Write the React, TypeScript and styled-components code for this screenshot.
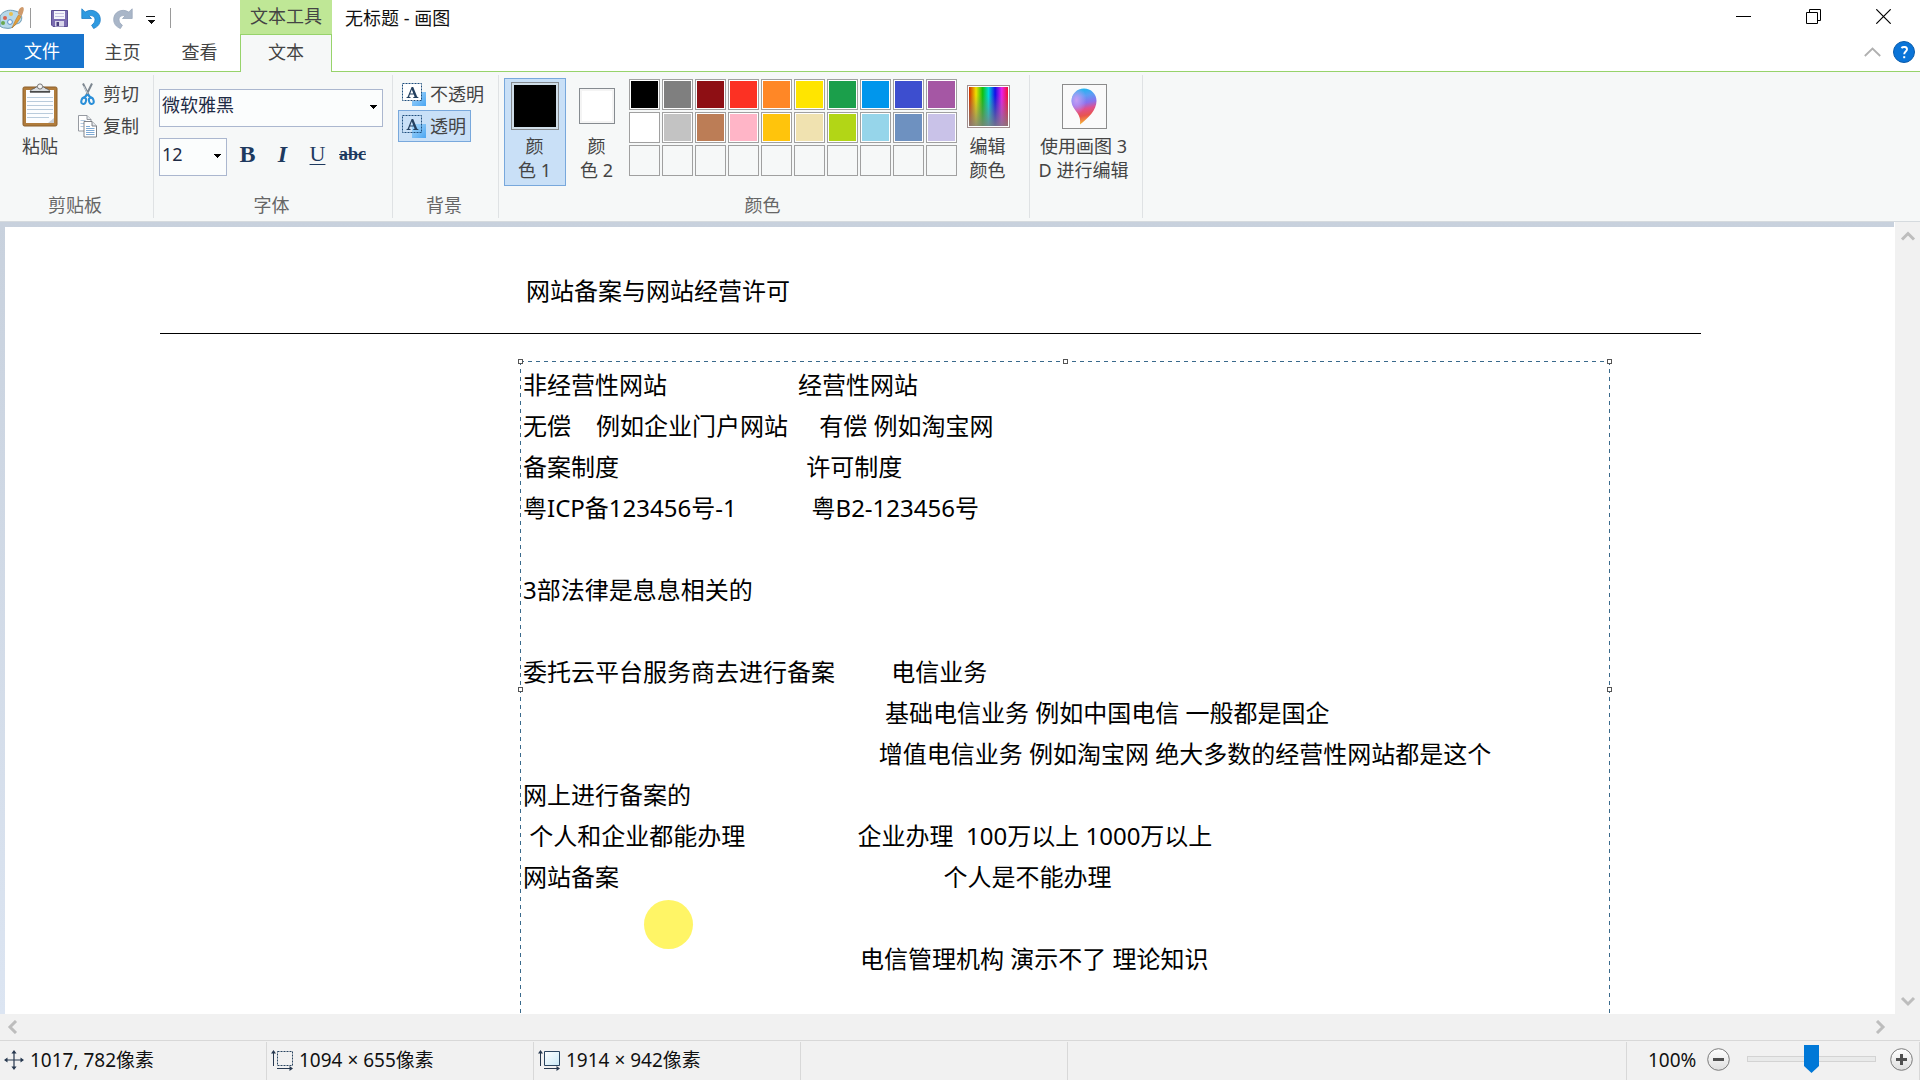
import React from "react";
import styled, { createGlobalStyle } from "styled-components";

const Global = createGlobalStyle`
  * { box-sizing: border-box; }
  body {
    margin: 0;
    background: #fff;
    overflow: hidden;
  }
  body, button, select, textarea, input {
    font-family: "Noto Sans", "Noto Sans CJK SC", sans-serif;
    font-size: 18px;
    font-weight: 400;
    line-height: 24px;
  }
  button, select, textarea { color: inherit; }
`;

const Window = styled.div`
  display: flex;
  flex-direction: column;
  height: 100vh;
  color: #444;
`;

const PlainButton = styled.button`
  display: flex;
  align-items: center;
  justify-content: center;
  padding: 0;
  border: 0;
  background: none;
`;

/* ---------- title bar ---------- */

const TitleBar = styled.header`
  display: flex;
  height: 34px;
  flex: none;
`;

const QuickAccess = styled.div`
  display: flex;
  align-items: center;
  width: 240px;
  padding-top: 2px;
`;

const QuickButtons = styled.div`
  display: flex;
  padding: 0 8px 0 13px;
`;

const QuickButton = styled(PlainButton)<{ $width: number }>`
  width: ${(p) => p.$width}px;
  height: 30px;
`;

const QuickDivider = styled.span`
  width: 1px;
  height: 20px;
  background: #9a9a9a;
`;

const ContextTitle = styled.div`
  width: 92px;
  padding-top: 4px;
  background: #bfe796;
  text-align: center;
`;

const Title = styled.h1`
  flex: 1;
  margin: 0;
  padding: 6px 0 0 13px;
  color: #111;
  font-size: 18px;
  font-weight: 400;
  line-height: 24px;
`;

const WindowButtons = styled.div`
  display: flex;
  align-items: flex-start;
  padding-right: 2px;
`;

const WindowButton = styled(PlainButton)`
  width: 70px;
  height: 33px;
`;

/* ---------- tabs ---------- */

const TabRow = styled.nav`
  display: flex;
  flex: none;
  height: 38px;
  background: linear-gradient(#97d36b, #97d36b) bottom / 100% 1px no-repeat;
`;

const FileTab = styled(PlainButton)`
  width: 84px;
  height: 34px;
  background: #1874cd;
  color: #fff;
`;

const Tab = styled(PlainButton)`
  width: 77px;
  height: 36px;
`;

const ActiveTab = styled(PlainButton)`
  width: 92px;
  height: 38px;
  margin-left: 2px;
  padding-bottom: 3px;
  border: solid #97d36b;
  border-width: 1px 1px 0;
  background: #f6f8f8;
`;

const TabTools = styled.div`
  display: flex;
  align-items: center;
  gap: 12px;
  height: 36px;
  margin-left: auto;
  padding-right: 5px;
`;

/* ---------- ribbon ---------- */

const Ribbon = styled.section`
  display: flex;
  flex: none;
  height: 150px;
  padding: 3px 0;
  border-bottom: 1px solid #d5dade;
  background: #f6f8f8;
`;

const Group = styled.div<{ $width: number }>`
  display: flex;
  flex-direction: column;
  width: ${(p) => p.$width}px;
  border-right: 1px solid #dfe2e4;
`;

const GroupBody = styled.div`
  display: flex;
  flex: 1;
`;

const GroupLabel = styled.div`
  height: 25px;
  padding-right: 3px;
  color: #666;
  text-align: center;
`;

const PasteButton = styled(PlainButton)`
  flex-direction: column;
  justify-content: flex-start;
  gap: 6px;
  width: 40px;
  height: 84px;
  margin: 8px 18px 0 20px;
`;

const SmallStack = styled.div`
  display: flex;
  flex-direction: column;
  padding-top: 3px;
`;

const SmallButton = styled(PlainButton)<{ $active?: boolean }>`
  align-self: flex-start;
  gap: 4px;
  height: 32px;
  padding: 0 4px 0 3px;
  border: 1px solid ${(p) => (p.$active ? "#78a8dc" : "transparent")};
  background: ${(p) => (p.$active ? "#c9e0f7" : "none")};
`;

const ClipButton = styled(PlainButton)`
  gap: 6px;
  height: 32px;
`;

const FontColumn = styled.div`
  display: flex;
  flex-direction: column;
  gap: 11px;
  padding: 14px 0 0 5px;
`;

const FontRow = styled.div`
  display: flex;
  align-items: flex-start;
`;

const SelectBox = styled.label<{ $width: number }>`
  display: block;
  position: relative;
  width: ${(p) => p.$width}px;
  height: 38px;
`;

const Select = styled.select`
  width: 100%;
  height: 100%;
  padding: 0 0 7px 2px;
  appearance: none;
  border: 1px solid #abb7cf;
  border-radius: 0;
  background: #fbfdfd;
  color: #1e2b45;
  outline: none;
`;

const SelectArrow = styled.svg`
  position: absolute;
  top: 16px;
  right: 6px;
  pointer-events: none;
`;

const StyleButton = styled(PlainButton)`
  width: 35px;
  height: 32px;
  color: #1e3a5f;
  font-family: "Liberation Serif", serif;
  font-size: 24px;
`;

const StyleButtons = styled.div`
  display: flex;
  padding-left: 3px;
`;

const Bold = styled.b``;
const Italic = styled.i`
  font-weight: 700;
`;
const Underline = styled.u`
  font-size: 22px;
  text-decoration-thickness: 1px;
  text-underline-offset: 3px;
`;
const Strike = styled.s`
  font-size: 18px;
  font-weight: 700;
`;

const BackgroundStack = styled(SmallStack)`
  padding-left: 5px;
`;

const ColorBody = styled(GroupBody)`
  padding: 3px 0 0 5px;
`;

const BigButton = styled(PlainButton)<{ $width: number; $active?: boolean }>`
  flex-direction: column;
  justify-content: space-between;
  width: ${(p) => p.$width}px;
  height: 108px;
  padding: 3px 0;
  border: 1px solid ${(p) => (p.$active ? "#78a8dc" : "transparent")};
  background: ${(p) => (p.$active ? "#c9e0f7" : "none")};
`;

const IconSlot = styled.span`
  display: flex;
  align-items: center;
  justify-content: center;
  height: 48px;
`;

const Caption = styled.span`
  display: block;
  padding-right: 1px;
  text-align: center;
  white-space: pre-line;
`;

const CurrentColor = styled.span<{ $size: number; $color: string }>`
  width: ${(p) => p.$size}px;
  height: ${(p) => p.$size}px;
  padding: 2px;
  border: 1px solid #868b90;
  background-color: ${(p) => p.$color};
  background-clip: content-box;
  box-shadow: inset 0 0 0 2px ${(p) => (p.$color === "#ffffff" ? "#f4f4f4" : "#cfdde8")};
`;

const Palette = styled.div`
  display: grid;
  grid-template-columns: repeat(10, 31px);
  grid-auto-rows: 31px;
  gap: 2px;
  padding: 1px 6px 0 1px;
`;

const Swatch = styled.button<{ $color?: string }>`
  padding: 1px;
  border: 1px solid #a0a0a0;
  background-color: ${(p) => p.$color ?? "#f6f8f8"};
  background-clip: content-box;
  box-shadow: inset 0 0 0 1px ${(p) => (p.$color ? "#ffffff" : "#f6f8f8")};
`;

const Spectrum = styled.span`
  width: 43px;
  height: 43px;
  padding: 1px;
  border: 1px solid #a08f8f;
  background:
    linear-gradient(transparent 20%, #808080 115%) content-box,
    linear-gradient(90deg, #d02a00, #f0e000 18%, #10c010 35%, #00d8d8 50%, #1010e8 67%, #e820e8 84%, #f01030) content-box,
    #fff;
`;

const Paint3D = styled.span`
  display: flex;
  align-items: center;
  justify-content: center;
  width: 45px;
  height: 45px;
  border: 1px solid #8c8c8c;
  background: #fafafa;
`;

/* ---------- work area ---------- */

const WorkArea = styled.main`
  display: grid;
  grid-template: minmax(0, 1fr) 26px / minmax(0, 1fr) 25px;
  flex: 1;
  min-height: 0;
`;

const Desk = styled.div`
  display: flex;
  min-height: 0;
  padding: 5px 1px 0 5px;
  background:
    linear-gradient(#fff, #fff) right / 1px 100% no-repeat,
    linear-gradient(#c8d1dd, #dce5f2);
`;

const Canvas = styled.div`
  position: relative;
  flex: 1;
  overflow: hidden;
  background: #fff;
  color: #000;
`;

const CanvasHeading = styled.p`
  position: absolute;
  left: 521px;
  top: 43px;
  margin: 0;
  font-size: 24px;
  line-height: 41px;
  white-space: nowrap;
`;

const CanvasRule = styled.div`
  position: absolute;
  left: 155px;
  top: 106px;
  width: 1541px;
  height: 1px;
  background: #000;
`;

const TextFrame = styled.div`
  position: absolute;
  left: 515px;
  top: 134px;
  width: 1090px;
  height: 656px;
  padding: 3px 2px 2px 3px;
  background:
    repeating-linear-gradient(90deg, #3a6a8c 0 4px, transparent 4px 8px) top / 100% 1px no-repeat,
    repeating-linear-gradient(90deg, #3a6a8c 0 4px, transparent 4px 8px) bottom / 100% 1px no-repeat,
    repeating-linear-gradient(#3a6a8c 0 4px, transparent 4px 8px) left / 1px 100% no-repeat,
    repeating-linear-gradient(#3a6a8c 0 4px, transparent 4px 8px) right / 1px 100% no-repeat;
`;

const TextEditor = styled.textarea`
  display: block;
  width: 100%;
  height: 100%;
  padding: 0;
  border: 0;
  background: none;
  outline: none;
  overflow: hidden;
  resize: none;
  font-size: 24px;
  line-height: 41px;
  white-space: pre;
`;

const Handle = styled.span<{ $x: string; $y: string }>`
  position: absolute;
  left: ${(p) => p.$x};
  top: ${(p) => p.$y};
  width: 5px;
  height: 5px;
  margin: -2px;
  border: 1px solid #555;
  background: #fff;
`;

const PointerSpot = styled.div`
  position: absolute;
  left: 639px;
  top: 673px;
  width: 49px;
  height: 49px;
  border-radius: 50%;
  background: #fff566;
`;

const VerticalScroll = styled.div`
  display: flex;
  flex-direction: column;
  align-items: center;
  justify-content: space-between;
  padding: 8px 0 6px;
  background: #f1f1f1;
`;

const HorizontalScroll = styled.div`
  display: flex;
  align-items: center;
  justify-content: space-between;
  grid-column: 1 / -1;
  padding: 0 32px 0 5px;
  background: #f1f1f1;
`;

const ScrollButton = styled(PlainButton)`
  width: 16px;
  height: 14px;
`;

/* ---------- status bar ---------- */

const StatusBar = styled.footer`
  display: flex;
  flex: none;
  height: 40px;
  padding-top: 1px;
  border-top: 1px solid #d8d8d8;
  background: #f1f1f1;
  color: #111;
  font-size: 19px;
`;

const StatusCell = styled.div`
  display: flex;
  align-items: center;
  gap: 6px;
  width: 267px;
  padding: 0 0 2px 4px;
  border-right: 1px solid #d8d8d8;
`;

const StatusFill = styled.div`
  flex: 1;
  border-right: 1px solid #d8d8d8;
`;

const ZoomCell = styled.div`
  display: flex;
  align-items: center;
  width: 293px;
  padding: 0 6px 4px 21px;
  border-right: 1px solid #d8d8d8;
`;

const ZoomValue = styled.span`
  width: 59px;
  padding-top: 2px;
`;

const ZoomSlider = styled.input`
  height: 28px;
  margin: 0 14px 0 17px;
  flex: 1;
  min-width: 0;
  appearance: none;
  background: none;
  &::-webkit-slider-runnable-track {
    height: 6px;
    border: 1px solid #d3d3d3;
    background: #e9eaea;
  }
  &::-webkit-slider-thumb {
    appearance: none;
    width: 15px;
    height: 28px;
    margin-top: -12px;
    border: 0;
    border-radius: 0;
    background: #0078d7;
    clip-path: polygon(0 0, 100% 0, 100% 75%, 50% 100%, 0 75%);
  }
`;

/* ---------- drawings ---------- */

const AppIcon = () => (
  <svg width="25" height="24" viewBox="0 0 25 24">
    <path d="M0 10C3 5 9 3 15 5c6 1 8 6 6 10-1 3-4 2-6 4-2 3-6 4-10 3-2 0-4-1-5-2z" fill="#b7d9ea" stroke="#6f9cb5" />
    <circle cx="11" cy="8" r="2" fill="#e9c04e" />
    <circle cx="5" cy="12" r="2" fill="#d8644f" />
    <circle cx="3" cy="17" r="2" fill="#6aa84f" />
    <circle cx="10" cy="16" r="2.4" fill="#f4fbff" stroke="#5b8fc9" />
    <path d="M12 22c2-5 4-9 6.500-13l2.500 1.500c-2 4-5 8-9 11.500z" fill="#e3a03c" stroke="#b9772a" strokeWidth=".6" />
    <path d="M18 8c0-3 1-6 4-7 2 0 2 2 1.500 4s-1 3-2 5z" fill="#cf9a6b" />
  </svg>
);

const SaveIcon = () => (
  <svg width="17" height="17" viewBox="0 0 17 17">
    <path d="M.5.5h16v16H2l-1.500-1.500z" fill="#7a6bb0" stroke="#5d4f94" />
    <path d="M3 1h11v8H3z" fill="#f5f4fb" />
    <path d="M4 3.500h9M4 6.500h9" stroke="#c5bfe0" />
    <path d="M4 11h9v5.500H4z" fill="#d9d6ea" />
    <path d="M5.500 12H8v4H5.500z" fill="#4c4180" />
  </svg>
);

const TurnArrow = ({ color, edge, flip }: { color: string; edge: string; flip?: boolean }) => (
  <svg width="20" height="21" viewBox="0 0 20 21">
    <g transform={flip ? "translate(20 0) scale(-1 1)" : undefined}>
      <path
        d="M.8 .8V10.500H10.500L7.800 7.800c3.500-.8 6 .8 6.200 3.700.1 2.300-1.200 4.200-3.400 5.700l2 3.300c4.500-1.800 6.800-5 6.700-9.200C19.200 4.200 11.500-.2 4.200 4z"
        fill={color}
        stroke={edge}
        strokeWidth=".8"
      />
    </g>
  </svg>
);

const CustomizeIcon = () => (
  <svg width="9" height="12" viewBox="0 0 9 12" shapeRendering="crispEdges">
    <path d="M0 4h9v1H0zM1 8h8L5 12z" fill="#111" />
  </svg>
);

const MinimizeIcon = () => (
  <svg width="15" height="15" viewBox="0 0 15 15" shapeRendering="crispEdges">
    <path d="M0 7h15v1H0z" fill="#000" />
  </svg>
);

const RestoreIcon = () => (
  <svg width="15" height="15" viewBox="0 0 15 15" fill="none" stroke="#000">
    <path d="M.5 3.500h11v11H.5zM3.500 3.500v-3h11v11h-3" />
  </svg>
);

const CloseIcon = () => (
  <svg width="15" height="15" viewBox="0 0 15 15" stroke="#000" strokeWidth="1.200">
    <path d="M.3.3l14.400 14.400M14.700.3L.3 14.700" />
  </svg>
);

const CollapseIcon = () => (
  <svg width="17" height="10" viewBox="0 0 17 10" fill="none" stroke="#b0b0b0" strokeWidth="1.800">
    <path d="M.8 9l7.700-7.500L16.200 9" />
  </svg>
);

const HelpIcon = () => (
  <svg width="22" height="22" viewBox="0 0 22 22">
    <circle cx="11" cy="11" r="10.500" fill="#0a74d8" stroke="#0b5cab" />
    <path d="M8.400 7c1.500-1.500 5.600-1.500 5.600 1.200 0 2.300-2.800 2.400-2.800 5" fill="none" stroke="#fff" strokeWidth="1.900" />
    <path d="M10.200 15.200h2v2h-2z" fill="#fff" />
  </svg>
);

const PasteIcon = () => (
  <svg width="36" height="45" viewBox="0 0 36 45">
    <rect x="1" y="4" width="34" height="39" rx="1.500" fill="#b07c3c" stroke="#8b5f2b" />
    <path d="M4 7h28v33H4z" fill="#fcfdff" />
    <path d="M26 40l6-5v5z" fill="#c9ced6" />
    <path d="M5 14.500h26M5 18.500h26M5 22.500h26M5 26.500h26M5 30.500h26M5 34.500h22" stroke="#b9cbdc" />
    <path d="M8 8.500c1-3 5-2.500 6-4.500h8c1 2 5 1.500 6 4.500z" fill="#d9dcdf" stroke="#555" strokeWidth=".8" />
    <path d="M8 9h20" stroke="#333" strokeWidth="1.300" />
    <circle cx="18" cy="3.500" r="2.600" fill="#f4f4f4" stroke="#777" />
  </svg>
);

const CutIcon = () => (
  <svg width="19" height="24" viewBox="0 0 19 24" fill="none">
    <path d="M5 1.500l6.200 12.800M14 1.500L7.800 14.300" stroke="#7d8790" strokeWidth="2" />
    <path d="M5.600 4l3.900 7.500" stroke="#c9d0d6" />
    <path d="M9.500 12.500L5.500 16M9.500 12.500l4 3.500" stroke="#2b8fd8" strokeWidth="2.200" />
    <ellipse cx="5.700" cy="18.800" rx="2.300" ry="3.200" stroke="#2b8fd8" strokeWidth="2" transform="rotate(18 5.700 18.800)" />
    <ellipse cx="13.300" cy="18.800" rx="2.300" ry="3.200" stroke="#2b8fd8" strokeWidth="2" transform="rotate(-18 13.300 18.800)" />
  </svg>
);

const CopyIcon = () => (
  <svg width="19" height="23" viewBox="0 0 19 23" strokeWidth=".9">
    <path d="M.5.5H9l4 4v11.500H.5z" fill="#fff" stroke="#8b9097" />
    <path d="M9 .5v4h4" fill="#e4e8ec" stroke="#8b9097" />
    <path d="M2.500 5.500h5M2.500 8.500h4M2.500 11.500h3" stroke="#a9c3dd" />
    <path d="M6 6.500h8l4.500 4.500v11H6z" fill="#fff" stroke="#6f747b" />
    <path d="M14 6.500V11h4.500" fill="#e4e8ec" stroke="#6f747b" />
    <path d="M8 11.500h4M8 13.500h8.500M8 15.500h8.500M8 17.500h8.500M8 19.500h8.500" stroke="#6fa0cf" />
  </svg>
);

const ArrowDown = () => (
  <SelectArrow width="7" height="4" viewBox="0 0 7 4" shapeRendering="crispEdges">
    <path d="M0 0h7L3.500 4z" fill="#000" />
  </SelectArrow>
);

const BackdropIcon = ({ opaque }: { opaque?: boolean }) => (
  <svg width="24" height="23" viewBox="0 0 24 23">
    <defs>
      <linearGradient id="backdropBlue" x1="0" y1="0" x2="1" y2="1">
        <stop offset="0" stopColor="#a8d8fb" />
        <stop offset="1" stopColor="#4ba6f2" />
      </linearGradient>
    </defs>
    <path d="M10 9h14v14H10z" fill="url(#backdropBlue)" />
    {opaque && <path d="M1 1h18v17H1z" fill="#fff" />}
    <path d="M.5.500h19v17H.5z" fill="none" stroke="#1f4e7d" strokeDasharray="2 1" />
    <path
      d="M4.500 15v-.8l1.200-.4L9.600 4h1.600l4 9.800 1.200.4v.8h-5.200v-.8l1.400-.4-.8-2.200H7.900l-.8 2.200 1.500.4v.8zM8.300 10.400h3L9.800 6.400z"
      fill="#24405f"
    />
  </svg>
);

const Paint3DIcon = () => (
  <svg width="26" height="37" viewBox="0 0 26 37">
    <defs>
      <linearGradient id="dropBody" x1=".35" y1="0" x2=".5" y2="1">
        <stop offset="0" stopColor="#18b8ee" />
        <stop offset=".22" stopColor="#5c9df5" />
        <stop offset=".42" stopColor="#8a70ec" />
        <stop offset=".58" stopColor="#e0508e" />
        <stop offset=".76" stopColor="#e8554e" />
        <stop offset="1" stopColor="#f8c030" />
      </linearGradient>
      <radialGradient id="dropShine" cx=".2" cy=".32" r=".4">
        <stop offset="0" stopColor="#c79cf4" />
        <stop offset="1" stopColor="#c79cf4" stopOpacity="0" />
      </radialGradient>
    </defs>
    <path d="M13 .5c7 0 12.500 5.500 12.500 12.500 0 9-8 17-16.500 23.500.5-5 0-7.500-3-12C3 20.500.5 17 .5 13 .5 6 6 .5 13 .5z" fill="url(#dropBody)" />
    <path d="M13 .5c7 0 12.500 5.500 12.500 12.500 0 9-8 17-16.500 23.500.5-5 0-7.500-3-12C3 20.500.5 17 .5 13 .5 6 6 .5 13 .5z" fill="url(#dropShine)" />
  </svg>
);

const chevrons = {
  up: "M2 9.500L8 3.500l6 6",
  down: "M2 4l6 6 6-6",
  left: "M11 1L5 7l6 6",
  right: "M5 1l6 6-6 6",
};

const Chevron = ({ dir }: { dir: keyof typeof chevrons }) => (
  <svg width="16" height="14" viewBox="0 0 16 14" fill="none" stroke="#bdbdbd" strokeWidth="3">
    <path d={chevrons[dir]} />
  </svg>
);

const PositionIcon = () => (
  <svg width="20" height="20" viewBox="0 0 20 20">
    <path d="M10 2v16M2 10h16" stroke="#27384f" strokeWidth="1.200" />
    <path d="M10 0l2.600 3.500H7.400zM10 20l2.600-3.500H7.400zM0 10l3.500-2.600v5.200zM20 10l-3.500-2.600v5.200z" fill="#27384f" />
  </svg>
);

const SizeIcon = ({ dashed }: { dashed?: boolean }) => (
  <svg width="22" height="21" viewBox="0 0 22 21">
    <defs>
      <linearGradient id="sheetFill" x1="0" y1="0" x2="1" y2="1">
        <stop offset="0" stopColor="#fff" />
        <stop offset="1" stopColor="#c9e9f7" />
      </linearGradient>
    </defs>
    <path
      d="M6.500 1.500h15v14h-15z"
      fill={dashed ? "none" : "url(#sheetFill)"}
      stroke="#2b4560"
      strokeDasharray={dashed ? "2 1" : undefined}
    />
    <path d="M2.500 2v14M6 18.500h13" stroke="#27384f" />
    <path d="M2.500 0L5 3.500H0zM22 18.500L18.500 21v-5z" fill="#27384f" />
  </svg>
);

const ZoomIcon = ({ plus }: { plus?: boolean }) => (
  <svg width="23" height="23" viewBox="0 0 23 23">
    <defs>
      <linearGradient id="zoomFace" x1="0" y1="0" x2="0" y2="1">
        <stop offset="0" stopColor="#fff" />
        <stop offset="1" stopColor="#dedede" />
      </linearGradient>
    </defs>
    <circle cx="11.500" cy="11.500" r="10.800" fill="url(#zoomFace)" stroke="#7b7b7b" />
    <path d="M6 11.500h11" stroke="#4f4f4f" strokeWidth="3" />
    {plus && <path d="M11.500 6v11" stroke="#4f4f4f" strokeWidth="3" />}
  </svg>
);

/* ---------- content ---------- */

const paletteColors: (string | undefined)[] = [
  "#000000", "#7f7f7f", "#8e0f14", "#fc3123", "#ff8726", "#ffe500", "#1b9f4b", "#0096ec", "#3d4ecf", "#a557a4",
  "#ffffff", "#c3c3c3", "#bc7d56", "#ffb5c7", "#ffc40c", "#f0e2b0", "#b2d616", "#96d5ea", "#6e91c0", "#c9c2e8",
  ...Array(10).fill(undefined),
];

const gap = (n: number) => " ".repeat(n);

const noteLines = [
  `非经营性网站${gap(21)}经营性网站`,
  `无偿${gap(4)}例如企业门户网站${gap(5)}有偿 例如淘宝网`,
  `备案制度${gap(30)}许可制度`,
  `粤ICP备123456号-1${gap(12)}粤B2-123456号`,
  "",
  "3部法律是息息相关的",
  "",
  `委托云平台服务商去进行备案${gap(9)}电信业务`,
  `${gap(58)}基础电信业务 例如中国电信 一般都是国企`,
  `${gap(57)}增值电信业务 例如淘宝网 绝大多数的经营性网站都是这个`,
  "网上进行备案的",
  ` 个人和企业都能办理${gap(18)}企业办理  100万以上 1000万以上`,
  `网站备案${gap(52)}个人是不能办理`,
  "",
  `${gap(54)}电信管理机构 演示不了 理论知识`,
];

const handles = [
  ["0px", "0px"],
  ["50%", "0px"],
  ["calc(100% - 1px)", "0px"],
  ["0px", "50%"],
  ["calc(100% - 1px)", "50%"],
];

export default function App() {
  return (
    <Window>
      <Global />
      <TitleBar>
        <QuickAccess>
          <AppMark><AppIcon /></AppMark>
          <QuickDivider />
          <QuickButtons>
            <QuickButton $width={30} aria-label="保存"><SaveIcon /></QuickButton>
            <QuickButton $width={34} aria-label="撤消"><TurnArrow color="#2f9ae0" edge="#1f7fc6" /></QuickButton>
            <QuickButton $width={30} aria-label="重做"><TurnArrow color="#a9b6c8" edge="#9aa8bc" flip /></QuickButton>
            <QuickButton $width={24} aria-label="自定义快速访问工具栏"><CustomizeIcon /></QuickButton>
          </QuickButtons>
          <QuickDivider />
        </QuickAccess>
        <ContextTitle>文本工具</ContextTitle>
        <Title>无标题 - 画图</Title>
        <WindowButtons>
          <WindowButton aria-label="最小化"><MinimizeIcon /></WindowButton>
          <WindowButton aria-label="还原"><RestoreIcon /></WindowButton>
          <WindowButton aria-label="关闭"><CloseIcon /></WindowButton>
        </WindowButtons>
      </TitleBar>
      <TabRow>
        <FileTab>文件</FileTab>
        <Tab>主页</Tab>
        <Tab>查看</Tab>
        <ActiveTab>文本</ActiveTab>
        <TabTools>
          <PlainButton aria-label="折叠功能区"><CollapseIcon /></PlainButton>
          <PlainButton aria-label="帮助"><HelpIcon /></PlainButton>
        </TabTools>
      </TabRow>
      <Ribbon>
        <Group $width={154}>
          <GroupBody>
            <PasteButton><PasteIcon />粘贴</PasteButton>
            <SmallStack>
              <ClipButton><CutIcon />剪切</ClipButton>
              <ClipButton><CopyIcon />复制</ClipButton>
            </SmallStack>
          </GroupBody>
          <GroupLabel>剪贴板</GroupLabel>
        </Group>
        <Group $width={239}>
          <GroupBody>
            <FontColumn>
              <SelectBox $width={224}>
                <Select aria-label="字体" defaultValue="微软雅黑"><option>微软雅黑</option></Select>
                <ArrowDown />
              </SelectBox>
              <FontRow>
                <SelectBox $width={68}>
                  <Select aria-label="字号" defaultValue="12"><option>12</option></Select>
                  <ArrowDown />
                </SelectBox>
                <StyleButtons>
                  <StyleButton aria-label="加粗"><Bold>B</Bold></StyleButton>
                  <StyleButton aria-label="倾斜"><Italic>I</Italic></StyleButton>
                  <StyleButton aria-label="下划线"><Underline>U</Underline></StyleButton>
                  <StyleButton aria-label="删除线"><Strike>abc</Strike></StyleButton>
                </StyleButtons>
              </FontRow>
            </FontColumn>
          </GroupBody>
          <GroupLabel>字体</GroupLabel>
        </Group>
        <Group $width={106}>
          <GroupBody>
            <BackgroundStack>
              <SmallButton><BackdropIcon opaque />不透明</SmallButton>
              <SmallButton $active><BackdropIcon />透明</SmallButton>
            </BackgroundStack>
          </GroupBody>
          <GroupLabel>背景</GroupLabel>
        </Group>
        <Group $width={531}>
          <ColorBody>
            <BigButton $width={62} $active>
              <IconSlot><CurrentColor $size={48} $color="#000000" /></IconSlot>
              <Caption>{"颜\n色 1"}</Caption>
            </BigButton>
            <BigButton $width={62}>
              <IconSlot><CurrentColor $size={36} $color="#ffffff" /></IconSlot>
              <Caption>{"颜\n色 2"}</Caption>
            </BigButton>
            <Palette>
              {paletteColors.map((c, i) => (
                <Swatch key={i} $color={c} aria-label={c ?? "自定义颜色"} />
              ))}
            </Palette>
            <BigButton $width={50}>
              <IconSlot><Spectrum /></IconSlot>
              <Caption>{"编辑\n颜色"}</Caption>
            </BigButton>
          </ColorBody>
          <GroupLabel>颜色</GroupLabel>
        </Group>
        <Group $width={113}>
          <ColorBody>
            <BigButton $width={98}>
              <IconSlot><Paint3D><Paint3DIcon /></Paint3D></IconSlot>
              <Caption>{"使用画图 3\nD 进行编辑"}</Caption>
            </BigButton>
          </ColorBody>
        </Group>
      </Ribbon>
      <WorkArea>
        <Desk>
          <Canvas>
            <CanvasHeading>网站备案与网站经营许可</CanvasHeading>
            <CanvasRule />
            <TextFrame>
              <TextEditor aria-label="文本" spellCheck={false} defaultValue={noteLines.join("\n")} />
              {handles.map(([x, y]) => (
                <Handle key={x + y} $x={x} $y={y} />
              ))}
            </TextFrame>
            <PointerSpot />
          </Canvas>
        </Desk>
        <VerticalScroll>
          <ScrollButton aria-label="向上滚动"><Chevron dir="up" /></ScrollButton>
          <ScrollButton aria-label="向下滚动"><Chevron dir="down" /></ScrollButton>
        </VerticalScroll>
        <HorizontalScroll>
          <ScrollButton aria-label="向左滚动"><Chevron dir="left" /></ScrollButton>
          <ScrollButton aria-label="向右滚动"><Chevron dir="right" /></ScrollButton>
        </HorizontalScroll>
      </WorkArea>
      <StatusBar>
        <StatusCell><PositionIcon />1017, 782像素</StatusCell>
        <StatusCell><SizeIcon dashed />1094 × 655像素</StatusCell>
        <StatusCell><SizeIcon />1914 × 942像素</StatusCell>
        <StatusCell />
        <StatusFill />
        <ZoomCell>
          <ZoomValue>100%</ZoomValue>
          <PlainButton aria-label="缩小"><ZoomIcon /></PlainButton>
          <ZoomSlider type="range" min="0" max="100" defaultValue="50" aria-label="缩放" />
          <PlainButton aria-label="放大"><ZoomIcon plus /></PlainButton>
        </ZoomCell>
      </StatusBar>
    </Window>
  );
}

const AppMark = styled.span`
  display: flex;
  width: 30px;
`;
